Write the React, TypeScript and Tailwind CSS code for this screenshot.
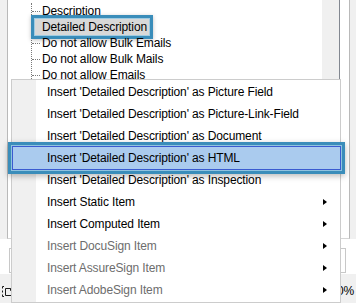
import React from "react";

type TreeItem = { label: string; selected?: boolean };
type MenuItem = { label: string; active?: boolean; sub?: boolean; disabled?: boolean };

const treeItems: TreeItem[] = [
  { label: "Description" },
  { label: "Detailed Description", selected: true },
  { label: "Do not allow Bulk Emails" },
  { label: "Do not allow Bulk Mails" },
  { label: "Do not allow Emails" },
];

const menuItems: MenuItem[] = [
  { label: "Insert 'Detailed Description' as Picture Field" },
  { label: "Insert 'Detailed Description' as Picture-Link-Field" },
  { label: "Insert 'Detailed Description' as Document" },
  { label: "Insert 'Detailed Description' as HTML", active: true },
  { label: "Insert 'Detailed Description' as Inspection" },
  { label: "Insert Static Item", sub: true },
  { label: "Insert Computed Item", sub: true },
  { label: "Insert DocuSign Item", sub: true, disabled: true },
  { label: "Insert AssureSign Item", sub: true, disabled: true },
  { label: "Insert AdobeSign Item", sub: true, disabled: true },
];

function Arrow() {
  return <span className="ml-auto h-0 w-0 border-y-[3px] border-l-[4px] border-y-transparent border-l-black" />;
}

function FitIcon() {
  return (
    <svg width="12" height="13" viewBox="0 0 12 13" fill="none" stroke="#1a1a1a" strokeWidth="1">
      <path d="M3 1.5H1.5V3.5M1.5 5.5V7.5M1.5 9.5V11.5H3" />
      <path d="M4.5 3.5H9.5L11.5 5.5V10.5H4.5Z" />
      <path d="M9.5 3.5V5.5H11.5" />
    </svg>
  );
}

export default function App() {
  return (
    <div className="relative h-[303px] w-[356px] overflow-hidden bg-[#f0f0f0] font-['Liberation_Sans',Arial,sans-serif] text-[12px] tracking-[-0.12px] text-black">
      {/* upper panel with the field tree */}
      <div className="flex h-[239px]">
        <div className="w-[7px]" />
        <div className="flex w-[343px] border-x border-b border-x-[#b9b9b9] border-b-[#d5d5d5] bg-white">
          <div className="flex w-[332px] border-r border-[#828790]">
            <div className="w-[314px] pl-[23px]">
              <div className="mt-[3px] border-l border-dotted border-[#7a7a7a]">
                {treeItems.map((item) => (
                  <div key={item.label} className="flex h-4 items-center">
                    <span className="h-0 w-[8px] border-t border-dotted border-[#7a7a7a]" />
                    {item.selected ? (
                      <span className="-ml-[5px] bg-[#d8d8d8] pl-[7px] pr-[2px] leading-4 shadow-[0_0_0_1px_#9ecbe2,0_0_0_4px_#3a8dba,0_1px_4px_4px_rgba(0,0,0,0.25)]">
                        {item.label}
                      </span>
                    ) : (
                      <span className="pl-[2px] leading-4">{item.label}</span>
                    )}
                  </div>
                ))}
              </div>
            </div>
            <div className="w-[17px] bg-[#f0f0f0]" />
          </div>
        </div>
      </div>

      {/* lower input area */}
      <div className="h-[35px] bg-white pt-[9px]">
        <div className="ml-[9px] h-[25px] w-[337px] border border-[#c8c8c8]" />
      </div>

      {/* status bar */}
      <div className="flex h-[29px] items-center justify-between pl-[1px] pr-[2px] pt-[5px]">
        <FitIcon />
        <span>100%</span>
      </div>

      {/* context menu */}
      <div className="absolute left-[11px] top-[79px] w-[330px] border border-[#cccccc] bg-[linear-gradient(to_right,#f0f0f0_24px,#ffffff_24px)] py-px">
        {menuItems.map((item) =>
          item.active ? (
            <div
              key={item.label}
              className="relative z-10 -my-px -mr-px flex h-6 items-center border border-[#3a5bd0] bg-[#aacbee] pl-[34px] pr-[12px] shadow-[0_0_0_1px_#8fc3df,0_0_0_4px_#3a8dba,0_2px_6px_4px_rgba(0,0,0,0.28)]"
            >
              <span>{item.label}</span>
            </div>
          ) : (
            <div
              key={item.label}
              className={`flex h-[22px] items-center pl-[35px] pr-[13px] ${item.disabled ? "text-[#6d6d6d]" : "text-black"}`}
            >
              <span>{item.label}</span>
              {item.sub && <Arrow />}
            </div>
          )
        )}
      </div>
    </div>
  );
}
